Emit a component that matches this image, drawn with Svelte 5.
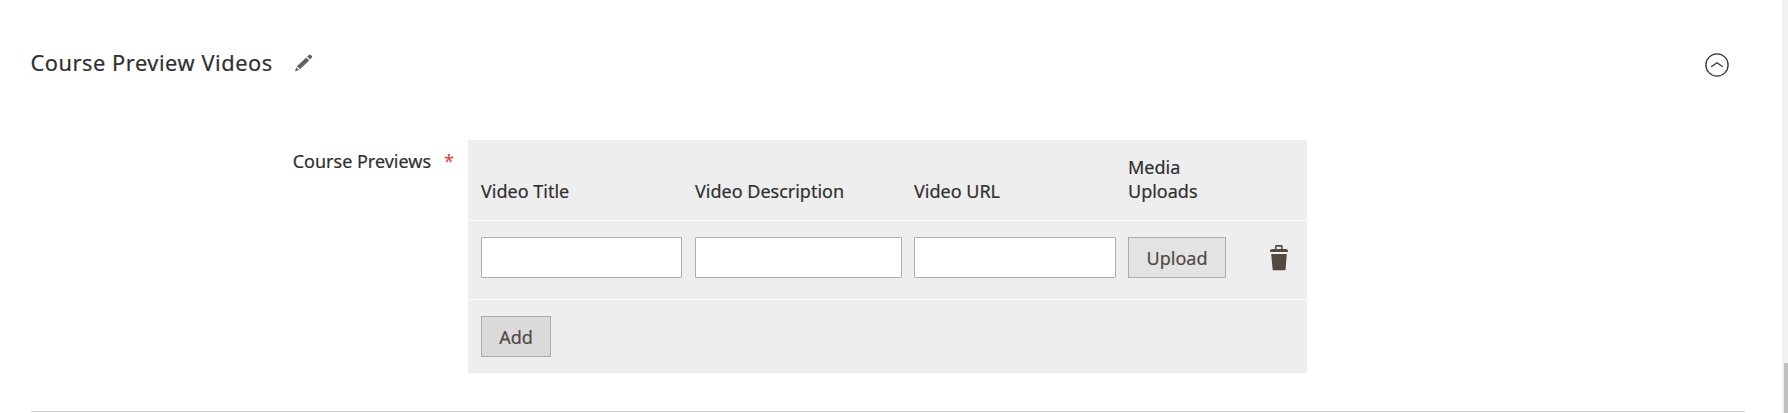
<script>
  const fields = ['Video Title', 'Video Description', 'Video URL'];
</script>

<div class="page">
  <main>
    <section>
      <header>
        <h2>Course Preview Videos</h2>
        <svg class="pencil" width="18" height="18" viewBox="0 0 18 18" aria-hidden="true">
          <path d="M11.2 3.4 14.2 6.4 5 15.2 1.9 12.3ZM12.1 2.5 14.2.7Q15 .2 15.7.9L16.9 2.1Q17.5 2.8 16.9 3.5L15.1 5.4ZM1.2 13.2 4.1 16.1 0 17.4Z" />
        </svg>
        <svg class="collapse" width="24" height="24" viewBox="0 0 24 24" aria-hidden="true">
          <circle cx="12" cy="12" r="11.1" />
          <path d="m6.2 13.8 5.8-4.1 5.8 4.1" />
        </svg>
      </header>
      <div class="field">
        <div class="label">Course Previews<span>*</span></div>
        <div class="table">
          <div class="row head">
            {#each fields as field}<div>{field}</div>{/each}
            <div class="media">Media Uploads</div>
          </div>
          <div class="row inputs">
            {#each fields as field}<input type="text" />{/each}
            <button class="upload">Upload</button>
            <svg class="trash" width="18" height="26" viewBox="0 0 18 26" aria-hidden="true">
              <path fill-rule="evenodd" d="M5 4V1.4Q5 0 6.4 0H11.3Q12.7 0 12.7 1.4V4H16Q18 4 18 6V7H0V6Q0 4 2 4ZM6.5 4H11.2V1.8H6.5ZM1.2 9H16.8L15.5 25.3H2.7Z" />
            </svg>
          </div>
          <div class="foot"><button class="add">Add</button></div>
        </div>
      </div>
    </section>
  </main>
  <div class="scroll"><div class="thumb"></div></div>
</div>

<style>
  :global(body) { background: #fff; overflow: hidden; }
  .page {
    display: flex;
    height: 413px;
    box-sizing: border-box;
    font: 18px/24px "Noto Sans", "Open Sans", sans-serif;
    -webkit-text-stroke: .2px currentColor;
    color: #303030;
  }
  main { flex: 1; padding: 0 37px 0 31px; }
  section { height: 411px; border-bottom: 1px solid #cacaca; }
  header { display: flex; align-items: center; height: 140px; box-sizing: border-box; padding-bottom: 13px; }
  h2 { margin: 0 0 0 -.5px; padding-bottom: 2px; font-size: 21.8px; line-height: 30px; font-weight: 400; letter-spacing: .54px; white-space: nowrap; }
  .pencil { margin: 0 0 2px 22px; fill: #626262; }
  .collapse { margin: 2px 16px 0 auto; fill: none; stroke: #38383a; stroke-width: 1.3; }
  .field { display: flex; align-items: flex-start; }
  .label { width: 423px; box-sizing: border-box; padding-top: 9px; text-align: right; white-space: nowrap; }
  .label span { margin-left: 13px; color: #d94b4b; }
  .table { width: 839px; height: 233px; margin-left: 14px; background: #eee; }
  .row { display: grid; grid-template-columns: 201px 13px 207px 12px 202px 12px 98px 44px 18px; padding-left: 13px; box-sizing: border-box; border-bottom: 1px solid #fff; }
  .row > :nth-child(1) { grid-column: 1; }
  .row > :nth-child(2) { grid-column: 3; }
  .row > :nth-child(3) { grid-column: 5; }
  .row > :nth-child(4) { grid-column: 7; }
  .row > :nth-child(5) { grid-column: 9; }
  .head { height: 81px; align-items: end; padding-bottom: 17px; }
  .media { width: 80px; }
  .inputs { height: 79px; padding-top: 16px; align-items: start; }
  input { width: 100%; height: 41px; box-sizing: border-box; margin: 0; padding: 0 12px; border: 1px solid #adadad; border-radius: 1px; background: #fff; }
  button { height: 41px; box-sizing: border-box; margin: 0; padding: 0; border: 1px solid #adadad; background: #e3e3e3; color: #514943; font: inherit; }
  .upload { width: 98px; }
  .trash { margin-top: 8px; fill: #514943; }
  .foot { padding: 16px 13px; }
  .add { width: 70px; background: #dadada; }
  .scroll { width: 6px; background: #f1f1f1; box-sizing: border-box; padding: 363px 0 0 2px; }
  .thumb { height: 50px; background: #c1c1c1; }
</style>
